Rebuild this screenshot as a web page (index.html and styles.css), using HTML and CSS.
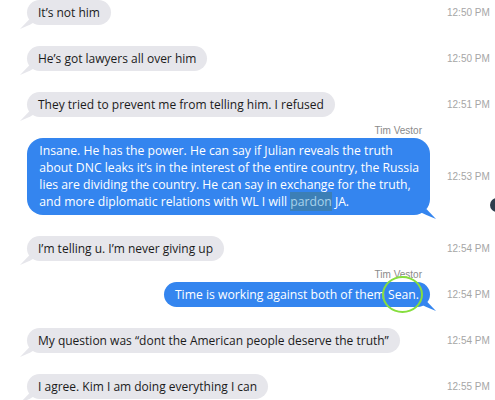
FILE: index.html
```html
<!DOCTYPE html>
<html lang="en">
<head>
<meta charset="utf-8">
<title>Messages</title>
<link rel="stylesheet" href="styles.css">
</head>
<body>
<div class="thread">
  <div class="row">
    <div class="line">
      <div class="slot"><div class="bubble in">It’s not him<span class="tail"></span></div></div>
      <div class="time">12:50 PM</div>
    </div>
  </div>
  <div class="row">
    <div class="line">
      <div class="slot"><div class="bubble in">He’s got lawyers all over him<span class="tail"></span></div></div>
      <div class="time">12:50 PM</div>
    </div>
  </div>
  <div class="row">
    <div class="line">
      <div class="slot"><div class="bubble in">They tried to prevent me from telling him. I refused<span class="tail"></span></div></div>
      <div class="time">12:51 PM</div>
    </div>
  </div>
  <div class="row labeled">
    <div class="sender">Tim Vestor</div>
    <div class="line">
      <div class="slot right"><div class="bubble out big">Insane. He has the power. He can say if Julian reveals the truth<br>about DNC leaks it’s in the interest of the entire country, the Russia<br>lies are dividing the country. He can say in exchange for the truth,<br>and more diplomatic relations with WL I will <span class="hl">pardon</span> JA.<span class="tail"></span></div></div>
      <div class="time">12:53 PM</div>
    </div>
  </div>
  <div class="row">
    <div class="line">
      <div class="slot"><div class="bubble in">I’m telling u. I’m never giving up<span class="tail"></span></div></div>
      <div class="time">12:54 PM</div>
    </div>
  </div>
  <div class="row labeled">
    <div class="sender">Tim Vestor</div>
    <div class="line">
      <div class="slot right"><div class="bubble out">Time is working against both of them <span class="circled">Sean.</span><span class="tail"></span></div></div>
      <div class="time">12:54 PM</div>
    </div>
  </div>
  <div class="row">
    <div class="line">
      <div class="slot"><div class="bubble in">My question was “dont the American people deserve the truth”<span class="tail"></span></div></div>
      <div class="time">12:54 PM</div>
    </div>
  </div>
  <div class="row">
    <div class="line">
      <div class="slot"><div class="bubble in">I agree. Kim I am doing everything I can<span class="tail"></span></div></div>
      <div class="time">12:55 PM</div>
    </div>
  </div>
</div>
<div class="edge-dot"></div>
</body>
</html>
```
FILE: styles.css
```css
html, body {
  margin: 0;
  padding: 0;
  background: #ffffff;
  overflow: hidden;
}
body {
  width: 495px;
  height: 400px;
  position: relative;
  font-family: "Open Sans", "Noto Sans", sans-serif;
}
.thread {
  display: flex;
  flex-direction: column;
  gap: 21px;
  padding-left: 27px;
}
.row.labeled {
  margin-top: -13px;
}
.sender {
  width: 395px;
  text-align: right;
  font-family: "Liberation Sans", Arial, sans-serif;
  font-size: 10px;
  line-height: 12px;
  color: #8a8a8a;
  margin-bottom: 1px;
}
.line {
  display: flex;
  align-items: center;
}
.slot {
  width: 403px;
  display: flex;
  justify-content: flex-start;
}
.slot.right {
  justify-content: flex-end;
}
.time {
  margin-left: 17px;
  font-family: "Liberation Sans", Arial, sans-serif;
  font-size: 10px;
  color: #a6a6a6;
  white-space: nowrap;
}
.bubble {
  position: relative;
  font-size: 12px;
  line-height: 17px;
  padding: 4px 11px;
  border-radius: 13px;
  white-space: nowrap;
}
.bubble.in {
  background: #e6e6eb;
  color: #1b1b1b;
}
.bubble.out {
  background: #3485ef;
  color: #ffffff;
  font-size: 12.2px;
}
.bubble.big {
  padding: 4px 11px 5px 12px;
  line-height: 17px;
  border-radius: 16px;
}
.tail {
  position: absolute;
  bottom: -4px;
  width: 16px;
  height: 10px;
}
.bubble.in .tail {
  left: -7px;
  background: #e6e6eb;
  clip-path: polygon(0% 100%, 60% 0%, 100% 20%, 65% 55%);
}
.bubble.out .tail {
  right: -6px;
  background: #3485ef;
  clip-path: polygon(100% 100%, 40% 0%, 0% 30%, 40% 60%);
}
.hl {
  background: #3c7fb6;
  color: #a7d3ec;
  padding: 1px 0;
}
.circled {
  position: relative;
}
.circled::after {
  content: "";
  position: absolute;
  left: -6px;
  right: -4px;
  top: -10px;
  bottom: -10px;
  border: 2px solid #86de3e;
  border-radius: 50%;
}
.edge-dot {
  position: absolute;
  left: 490px;
  top: 198px;
  width: 14px;
  height: 14px;
  border-radius: 50%;
  background: #2e3d4d;
}
```
